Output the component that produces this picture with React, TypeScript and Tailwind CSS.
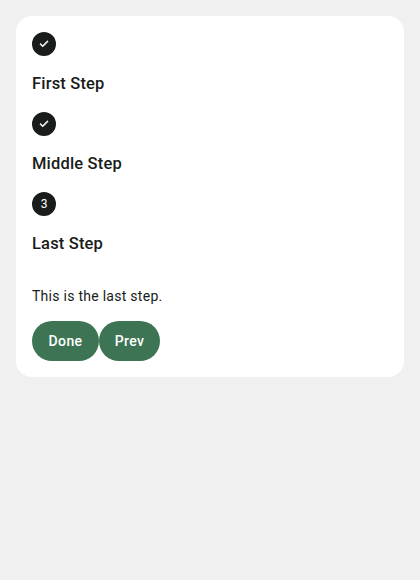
const Check = () => (
  <svg viewBox="-1 0 26 26" className="h-3.5 w-3.5" fill="#fff" stroke="#fff" strokeWidth="1.3">
    <path d="m9.55 15.88 8.8-8.77 1.23 1.23L9.55 18.37 4.42 13.24l1.23-1.23z" />
  </svg>
);

const steps = [
  { title: "First Step", done: true },
  { title: "Middle Step", done: true },
  { title: "Last Step", done: false },
];

export default function App() {
  return (
    <div className="min-h-screen bg-[#f0f0f0] p-4 font-['Roboto',sans-serif] text-[#181c1a]">
      <div className="rounded-2xl bg-white p-4">
        {steps.map((s, i) => (
          <div key={s.title} className="h-20">
            <div className="flex h-6 w-6 items-center justify-center rounded-full bg-[#181c1a] text-xs text-white">
              {s.done ? <Check /> : i + 1}
            </div>
            <div className="pt-4 text-[16.5px] leading-6 font-medium tracking-[0.17px]">{s.title}</div>
          </div>
        ))}
        <p className="mt-3.5 text-sm leading-5 tracking-[0.27px]">This is the last step.</p>
        <div className="mt-[15px] flex text-sm font-medium tracking-[0.35px] text-white">
          <button className="h-10 w-[67px] rounded-full bg-[#3d7554]">Done</button>
          <button className="h-10 w-[61px] rounded-full bg-[#3d7554]">Prev</button>
        </div>
      </div>
    </div>
  );
}
